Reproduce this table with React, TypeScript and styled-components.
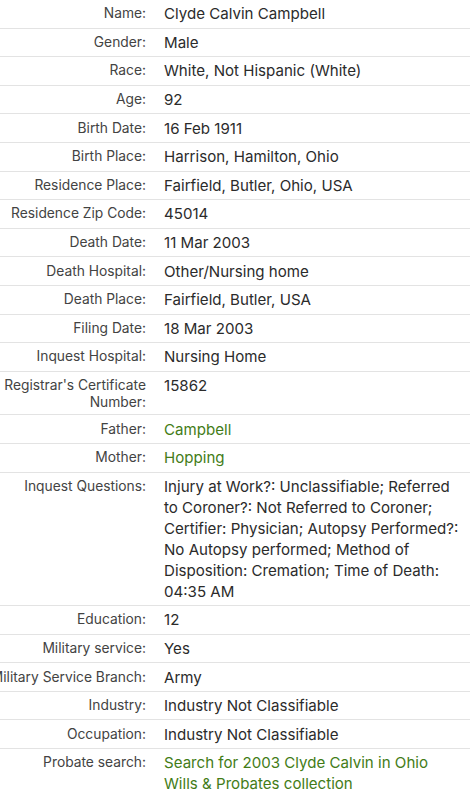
import React from 'react';
import styled, { createGlobalStyle } from 'styled-components';

interface Fact {
  label: string;
  value: string;
  link?: boolean;
}

const facts: Fact[] = [
  { label: 'Name', value: 'Clyde Calvin Campbell' },
  { label: 'Gender', value: 'Male' },
  { label: 'Race', value: 'White, Not Hispanic (White)' },
  { label: 'Age', value: '92' },
  { label: 'Birth Date', value: '16 Feb 1911' },
  { label: 'Birth Place', value: 'Harrison, Hamilton, Ohio' },
  { label: 'Residence Place', value: 'Fairfield, Butler, Ohio, USA' },
  { label: 'Residence Zip Code', value: '45014' },
  { label: 'Death Date', value: '11 Mar 2003' },
  { label: 'Death Hospital', value: 'Other/Nursing home' },
  { label: 'Death Place', value: 'Fairfield, Butler, USA' },
  { label: 'Filing Date', value: '18 Mar 2003' },
  { label: 'Inquest Hospital', value: 'Nursing Home' },
  { label: "Registrar's Certificate Number", value: '15862' },
  { label: 'Father', value: 'Campbell', link: true },
  { label: 'Mother', value: 'Hopping', link: true },
  {
    label: 'Inquest Questions',
    value:
      'Injury at Work?: Unclassifiable; Referred to Coroner?: Not Referred to Coroner; Certifier: Physician; Autopsy Performed?: No Autopsy performed; Method of Disposition: Cremation; Time of Death: 04:35 AM',
  },
  { label: 'Education', value: '12' },
  { label: 'Military service', value: 'Yes' },
  { label: 'Military Service Branch', value: 'Army' },
  { label: 'Industry', value: 'Industry Not Classifiable' },
  { label: 'Occupation', value: 'Industry Not Classifiable' },
  { label: 'Probate search', value: 'Search for 2003 Clyde Calvin in Ohio Wills & Probates collection', link: true },
];

const GlobalStyle = createGlobalStyle`
  html, body {
    margin: 0;
    padding: 0;
    background: #fff;
  }
  body {
    font-family: Inter, "Liberation Sans", Arial, sans-serif;
    -webkit-font-smoothing: antialiased;
  }
`;

const FactTable = styled.div`
  margin-left: -20px;
  width: 490px;
  overflow: hidden;
`;

const FactRow = styled.div`
  display: grid;
  grid-template-columns: 166px 1fr;
  column-gap: 18px;
  align-items: start;
  padding: 3.3px 0;
  border-bottom: 1px solid #e3e3e3;

  &:last-child {
    border-bottom: none;
  }
`;

const FactLabel = styled.div`
  padding-top: 2px;
  text-align: right;
  font-size: 13.8px;
  line-height: 17px;
  color: #434343;
`;

const FactValue = styled.div<{ $link?: boolean }>`
  padding-right: 10px;
  font-size: 15.1px;
  line-height: 21px;
  color: ${(p) => (p.$link ? '#437c17' : '#2b2b2b')};
  cursor: ${(p) => (p.$link ? 'pointer' : 'auto')};
`;

export default function App(): React.ReactElement {
  return (
    <>
      <GlobalStyle />
      <FactTable>
        {facts.map((f) => (
          <FactRow key={f.label}>
            <FactLabel>{f.label}:</FactLabel>
            <FactValue $link={f.link}>{f.value}</FactValue>
          </FactRow>
        ))}
      </FactTable>
    </>
  );
}
